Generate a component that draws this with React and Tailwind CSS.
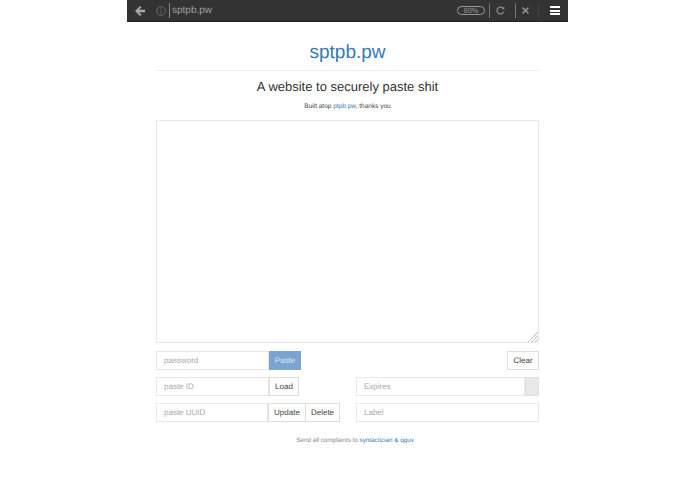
import React from 'react';

const inputCls = 'h-[19px] border border-[#e8e8e8] bg-white px-[7px] text-[8px] text-[#555] placeholder:text-[#a8a8a8] outline-none [text-rendering:geometricPrecision]';
const btnCls = 'h-[19px] border border-[#ddd] bg-white text-[8px] text-[#444] flex items-center justify-center [text-rendering:geometricPrecision]';

export default function App() {
  return (
    <div className="min-h-[494px] bg-white flex justify-center font-['Liberation_Sans',sans-serif] [text-rendering:geometricPrecision]">
      <div className="w-[441px]">
        {/* Browser bar */}
        <div className="h-[22px] bg-[#333333] border-b border-[#222] flex items-center text-[#aaa]">
          <svg className="ml-[8px] w-[10px] h-[10px]" viewBox="0 0 10 10" fill="#a8a8a8">
            <path d="M0 5 L5 0 L6.5 1.3 L4.2 3.7 H10 V6.3 H4.2 L6.5 8.7 L5 10 Z" />
          </svg>
          <svg className="ml-[11px] w-[10px] h-[10px]" viewBox="0 0 10 10" fill="none" stroke="#6f6f6f" strokeWidth="0.9">
            <circle cx="5" cy="5" r="4.4" />
            <path d="M5 4.2 V7.6 M5 2.3 V3.3" />
          </svg>
          <div className="ml-[3px] w-px h-[15px] bg-[#888]" />
          <span className="ml-[2px] text-[10px] text-[#a0a0a0]">sptpb.pw</span>
          <div className="ml-auto flex items-center">
            <span className="w-[28px] h-[9px] rounded-full border border-[#999] flex items-center justify-center text-[7.5px] leading-none text-[#999]">80%</span>
            <div className="ml-[4px] w-px h-[15px] bg-[#777]" />
            <svg className="ml-[6px] w-[9px] h-[9px]" viewBox="0 0 10 10" fill="none" stroke="#8a8a8a" strokeWidth="1.5">
              <path d="M8.6 6.2 A3.8 3.8 0 1 1 7.6 2.3" />
              <path d="M6 3.6 H9.4 V0.4 Z" fill="#8a8a8a" stroke="none" />
            </svg>
            <div className="ml-[10px] w-px h-[15px] bg-[#777]" />
            <svg className="ml-[6px] w-[7px] h-[7px]" viewBox="0 0 7 7" stroke="#8f8f8f" strokeWidth="1.5">
              <path d="M0.6 0.6 L6.4 6.4 M6.4 0.6 L0.6 6.4" />
            </svg>
            <div className="ml-[9px] w-px h-[15px] bg-[#444]" />
            <div className="ml-[11px] mr-[8px] w-[10px] flex flex-col gap-[1.5px]">
              <div className="h-[2px] bg-white" />
              <div className="h-[2px] bg-white" />
              <div className="h-[2px] bg-white" />
            </div>
          </div>
        </div>

        {/* Page */}
        <div className="px-[29px]">
          <h1 className="pt-[19px] h-[49px] text-center text-[19px] leading-[24px] text-[#337ab7] border-b border-[#eee]">sptpb.pw</h1>
          <h2 className="mt-[7px] text-center text-[13px] leading-[17px] text-[#333]">A website to securely paste shit</h2>
          <p className="mt-[7px] text-center text-[6.5px] leading-[10px] text-[#444]">
            Built atop <a className="text-[#337ab7]">ptpb.pw</a>, thanks you
          </p>

          <div className="relative mt-[8px]">
            <textarea className="block w-[383px] h-[223px] border border-[#e8e8e8] bg-white outline-none resize-none" />
            <svg className="absolute right-[1px] bottom-[1px] w-[10px] h-[10px]" viewBox="0 0 10 10" stroke="#999" strokeWidth="0.7">
              <path d="M0 10 L10 0 M3.5 10 L10 3.5 M7 10 L10 7" />
            </svg>
          </div>

          <div className="mt-[8px] flex items-center">
            <input className={`${inputCls} w-[113px]`} placeholder="password" />
            <button className="h-[19px] w-[32px] bg-[#7aa5d0] text-[8px] text-[#dde8f3] [text-rendering:geometricPrecision]">Paste</button>
            <button className={`${btnCls} ml-auto w-[32px]`}>Clear</button>
          </div>

          <div className="mt-[7px] flex">
            <div className="w-[200px] flex">
              <input className={`${inputCls} w-[113px]`} placeholder="paste ID" />
              <button className={`${btnCls} w-[30px]`}>Load</button>
            </div>
            <div className="flex w-[183px]">
              <input className={`${inputCls} flex-1 min-w-0`} placeholder="Expires" />
              <div className="w-[14px] h-[19px] bg-[#e8e8e8] border border-[#e0e0e0]" />
            </div>
          </div>

          <div className="mt-[7px] flex">
            <div className="w-[200px] flex">
              <input className={`${inputCls} w-[112px]`} placeholder="paste UUID" />
              <button className={`${btnCls} w-[38px]`}>Update</button>
              <button className={`${btnCls} w-[34px] border-l-0`}>Delete</button>
            </div>
            <input className={`${inputCls} w-[183px]`} placeholder="Label" />
          </div>

          <p className="mt-[14px] pl-[15px] text-center text-[6.3px] leading-[10px] text-[#888]">
            Send all complaints to <a className="text-[#337ab7]">syntactician &amp; qguv</a>
          </p>
        </div>
      </div>
    </div>
  );
}
